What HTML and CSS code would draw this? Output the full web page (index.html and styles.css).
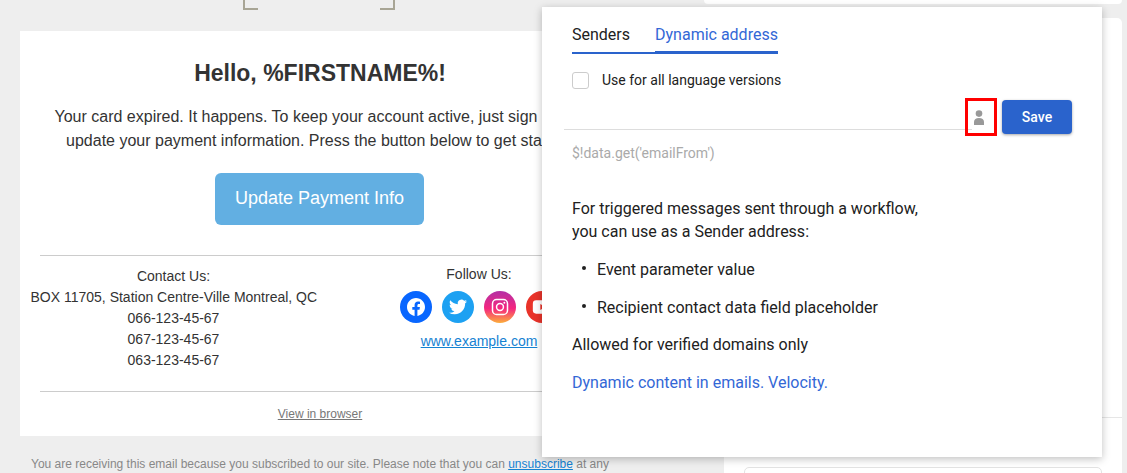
FILE: index.html
```html
<!DOCTYPE html>
<html lang="en">
<head>
    <meta charset="UTF-8">
    <meta name="viewport" content="width=device-width, initial-scale=1.0">
    <title>Email sender settings</title>
    <link rel="stylesheet" href="styles.css">
</head>
<body>
    <div class="page">
        <div class="preview">
            <div class="logo-slot">
                <div class="logo-frame">
                    <span class="corner corner-left"></span>
                    <span class="corner corner-right"></span>
                </div>
            </div>
            <div class="mail-card">
                <h1 class="mail-title">Hello, %FIRSTNAME%!</h1>
                <p class="mail-text">Your card expired. It happens. To keep your account active, just sign in and<br>update your payment information. Press the button below to get started.</p>
                <a class="pay-button" href="#">Update Payment Info</a>
                <div class="mail-footer">
                    <div class="contact">
                        <div>Contact Us:</div>
                        <div>BOX 11705, Station Centre-Ville Montreal, QC</div>
                        <div>066-123-45-67</div>
                        <div>067-123-45-67</div>
                        <div>063-123-45-67</div>
                    </div>
                    <div class="follow">
                        <div>Follow Us:</div>
                        <div class="socials">
                            <span class="social fb">
                                <svg viewBox="0 0 24 24" width="18" height="18"><path fill="#fff" d="M24 12.073c0-6.627-5.373-12-12-12s-12 5.373-12 12c0 5.99 4.388 10.954 10.125 11.854v-8.385H7.078v-3.47h3.047V9.43c0-3.007 1.792-4.669 4.533-4.669 1.312 0 2.686.235 2.686.235v2.953H15.83c-1.491 0-1.956.925-1.956 1.874v2.25h3.328l-.532 3.47h-2.796v8.385C19.612 23.027 24 18.062 24 12.073z"/></svg>
                            </span>
                            <span class="social tw">
                                <svg viewBox="0 0 24 24" width="18" height="18"><path fill="#fff" d="M23.953 4.57a10 10 0 01-2.825.775 4.958 4.958 0 002.163-2.723c-.951.555-2.005.959-3.127 1.184a4.92 4.92 0 00-8.384 4.482C7.69 8.095 4.067 6.13 1.64 3.162a4.822 4.822 0 00-.666 2.475c0 1.71.87 3.213 2.188 4.096a4.904 4.904 0 01-2.228-.616v.06a4.923 4.923 0 003.946 4.827 4.996 4.996 0 01-2.212.085 4.936 4.936 0 004.604 3.417 9.867 9.867 0 01-6.102 2.105c-.39 0-.779-.023-1.17-.067a13.995 13.995 0 007.557 2.209c9.053 0 13.998-7.496 13.998-13.985 0-.21 0-.42-.015-.63A9.935 9.935 0 0024 4.59z"/></svg>
                            </span>
                            <span class="social ig">
                                <svg viewBox="0 0 24 24" width="18" height="18"><rect x="2" y="2" width="20" height="20" rx="5.5" fill="none" stroke="#fff" stroke-width="2"/><circle cx="12" cy="12" r="4.6" fill="none" stroke="#fff" stroke-width="2"/><circle cx="17.8" cy="6.2" r="1.3" fill="#fff"/></svg>
                            </span>
                            <span class="social yt">
                                <svg viewBox="0 0 24 24" width="20" height="20"><rect x="1" y="4" width="22" height="16" rx="4" fill="#fff"/><path fill="#e9332a" d="M10 8.5v7l6-3.5z"/></svg>
                            </span>
                        </div>
                        <a class="site-link" href="#">www.example.com</a>
                    </div>
                </div>
                <div class="browser-row"><a href="#">View in browser</a></div>
            </div>
            <p class="legal">You are receiving this email because you subscribed to our site. Please note that you can <a href="#">unsubscribe</a> at any</p>
        </div>

        <div class="side">
            <div class="side-top"></div>
            <div class="side-panel">
                <div class="side-line"></div>
                <div class="side-field"></div>
            </div>
        </div>

        <div class="popover">
            <div class="tabs">
                <div class="tab">Senders</div>
                <div class="tab active">Dynamic address</div>
            </div>
            <label class="check-row">
                <span class="checkbox"></span>
                Use for all language versions
            </label>
            <div class="address-row">
                <div class="address-input">
                    <div class="person-box">
                        <svg viewBox="0 0 12 15" width="12" height="15"><circle cx="6" cy="3.6" r="3.3" fill="#999"/><path fill="#999" d="M1 15v-3.2C1 9.4 3 8 6 8s5 1.4 5 3.8V15z"/></svg>
                    </div>
                </div>
                <button class="save-btn">Save</button>
            </div>
            <div class="hint">$!data.get('emailFrom')</div>
            <p class="info info-first">For triggered messages sent through a workflow,<br>you can use as a Sender address:</p>
            <ul class="info-list">
                <li>Event parameter value</li>
                <li>Recipient contact data field placeholder</li>
            </ul>
            <p class="info">Allowed for verified domains only</p>
            <a class="info info-link" href="#">Dynamic content in emails. Velocity.</a>
        </div>
    </div>
</body>
</html>
```

FILE: styles.css
```css
html, body {
    margin: 0;
    height: 100%;
    overflow: hidden;
}
body {
    background-color: #eeeeee;
    font-family: "Liberation Sans", Arial, sans-serif;
}
.page {
    position: relative;
    display: flex;
    width: 1127px;
    height: 473px;
    overflow: hidden;
}

/* email preview */
.preview {
    flex: 0 0 724px;
    box-sizing: border-box;
    padding-left: 20px;
    background-color: #eeeeee;
}
.logo-slot {
    width: 600px;
    height: 31px;
}
.logo-frame {
    display: flex;
    justify-content: space-between;
    width: 152px;
    height: 10px;
    margin-left: 223px;
}
.corner {
    width: 13px;
    height: 8px;
    border-bottom: 2px solid #a8a595;
}
.corner-left {
    border-left: 2px solid #a8a595;
}
.corner-right {
    border-right: 2px solid #a8a595;
}
.mail-card {
    box-sizing: border-box;
    width: 600px;
    height: 405px;
    padding: 0 20px;
    background-color: #fff;
    color: #333;
    text-align: center;
}
.mail-title {
    margin: 0;
    padding-top: 28px;
    font-size: 23px;
    line-height: 28px;
    font-weight: bold;
}
.mail-text {
    margin: 18px -20px 0;
    font-size: 16px;
    line-height: 24px;
}
.pay-button {
    display: block;
    box-sizing: border-box;
    width: 209px;
    height: 52px;
    margin: 20px 0 30px 175px;
    border-radius: 6px;
    background-color: #62afe2;
    color: #fff;
    font-size: 18px;
    line-height: 50px;
    text-decoration: none;
}
.mail-footer {
    display: flex;
    height: 135px;
    border-top: 1px solid #ccc;
    border-bottom: 1px solid #ccc;
    font-size: 14px;
    line-height: 21px;
}
.contact {
    width: 286px;
    margin-left: -9.5px;
    padding-top: 10px;
    white-space: nowrap;
}
.follow {
    width: 160px;
    margin-left: 82.5px;
    padding-top: 8px;
}
.socials {
    display: flex;
    gap: 10px;
    margin: 6px 0 0 1px;
}
.social {
    display: flex;
    flex: 0 0 32px;
    align-items: center;
    justify-content: center;
    height: 32px;
    border-radius: 50%;
}
.fb {
    background-color: #0866ff;
}
.tw {
    background-color: #1da1f2;
}
.ig {
    background: linear-gradient(180deg, #b32fa5 0%, #f5267f 55%, #fcae3b 100%);
}
.yt {
    background-color: #e9332a;
}
.site-link {
    display: block;
    margin-top: 8px;
    color: #1582d2;
}
.browser-row {
    padding-top: 14px;
    font-size: 12px;
    line-height: 16px;
}
.browser-row a {
    color: #777;
}
.legal {
    width: 600px;
    margin: 21px 0 0;
    padding-left: 11px;
    box-sizing: border-box;
    color: #888;
    font-size: 12px;
    line-height: 14px;
    white-space: nowrap;
}
.legal a {
    color: #1582d2;
}

/* right column behind the popover */
.side {
    display: flex;
    flex: 1;
    flex-direction: column;
    padding-right: 5px;
}
.side-top {
    flex: 0 0 4px;
    margin: 0 0 14px -20px;
    border-radius: 0 0 5px 5px;
    background-color: #fff;
}
.side-panel {
    flex: 1;
    border-top-right-radius: 5px;
    background-color: #fff;
}
.side-line {
    height: 1px;
    margin-top: 399px;
    background-color: #e6e6e6;
}
.side-field {
    box-sizing: border-box;
    height: 30px;
    margin: 49px 20px 0;
    border: 1px solid #e3e3e3;
    border-radius: 5px;
}

/* sender popover */
.popover {
    position: absolute;
    top: 7px;
    left: 542px;
    box-sizing: border-box;
    width: 560px;
    height: 450px;
    padding: 0 30px;
    background-color: #fff;
    box-shadow: 0 2px 8px rgba(0, 0, 0, 0.25);
    color: #212121;
    font-family: Roboto, "Liberation Sans", sans-serif;
}
.tabs {
    display: flex;
    padding-top: 16px;
}
.tab {
    box-sizing: border-box;
    height: 31px;
    padding-right: 25px;
    border-bottom: 2px solid #2a63cc;
    font-size: 16px;
    line-height: 24px;
}
.tab.active {
    padding-right: 0;
    border-bottom-width: 3px;
    color: #3367d6;
}
.check-row {
    display: flex;
    align-items: center;
    gap: 13px;
    margin-top: 18px;
    font-size: 14px;
    line-height: 17px;
}
.checkbox {
    box-sizing: border-box;
    width: 17px;
    height: 17px;
    border: 1px solid #ccc;
    border-radius: 3px;
}
.address-row {
    display: flex;
    align-items: flex-start;
    justify-content: space-between;
    margin-top: 11px;
}
.address-input {
    position: relative;
    width: 408px;
    height: 29px;
    margin-left: -8px;
    border-bottom: 1px solid #ddd;
}
.person-box {
    position: absolute;
    top: -2px;
    left: 401px;
    display: flex;
    align-items: center;
    justify-content: center;
    box-sizing: border-box;
    width: 32px;
    height: 38px;
    padding-right: 4px;
    border: 3px solid #f00;
}
.save-btn {
    width: 70px;
    height: 34px;
    border: none;
    border-radius: 4px;
    background-color: #2a63cc;
    box-shadow: 0 1px 3px rgba(0, 0, 0, 0.35);
    color: #fff;
    font-family: Roboto, "Liberation Sans", sans-serif;
    font-size: 14px;
    font-weight: 500;
}
.hint {
    margin-top: 10px;
    color: #aaa;
    font-size: 14px;
    line-height: 18px;
}
.info {
    margin: 14px 0 0;
    font-size: 16px;
    line-height: 23px;
}
.info-first {
    margin-top: 35px;
}
.info-list {
    margin: 15px 0 0;
    padding: 0 0 0 25px;
    list-style: none;
    font-size: 16px;
    line-height: 23px;
}
.info-list li {
    display: flex;
    align-items: center;
    margin-bottom: 15px;
}
.info-list li:last-child {
    margin-bottom: 14px;
}
.info-list li::before {
    content: "";
    width: 4px;
    height: 4px;
    margin: -3px 11px 0 -15px;
    border-radius: 50%;
    background-color: #212121;
}
.info-link {
    display: block;
    margin-top: 15px;
    color: #3367d6;
    text-decoration: none;
}
```
